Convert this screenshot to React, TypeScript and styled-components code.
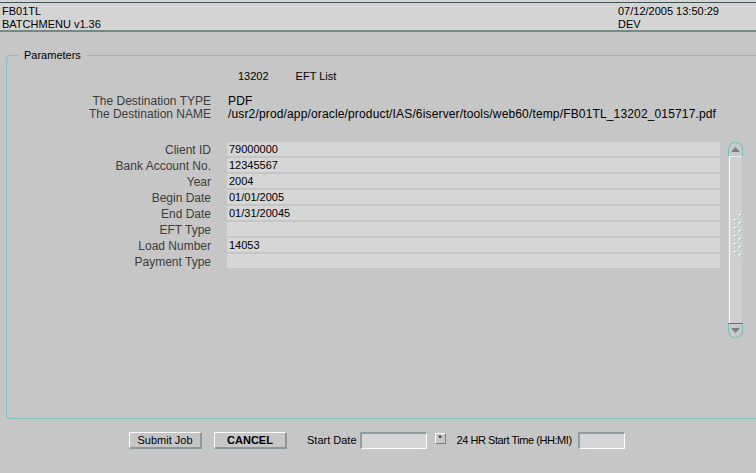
import React from "react";
import styled, { createGlobalStyle } from "styled-components";

const Global = createGlobalStyle`
  html, body { margin: 0; padding: 0; }
  body {
    background: #c6c6c6;
    font-family: "Liberation Sans", Arial, sans-serif;
    color: #000;
    width: 756px;
    height: 473px;
    overflow: hidden;
  }
`;

const Page = styled.div`
  width: 756px;
  height: 473px;
  display: flex;
  flex-direction: column;
`;

const HeaderOuter = styled.header`
  background: #d4d4d4;
  padding-top: 2px;
`;

const HeaderBar = styled.div`
  border-top: 1px solid #3b5654;
  border-bottom: 2px solid #718a86;
  padding: 2px 0 0 2px;
  box-sizing: border-box;
  height: 30px;
  display: grid;
  grid-template-columns: 616px 1fr;
  font-size: 11px;
  line-height: 13px;
`;

const HeaderCol = styled.div`
  display: flex;
  flex-direction: column;
`;

const Frame = styled.section`
  position: relative;
  margin: 23px 0 0 6px;
  height: 364px;
  box-sizing: border-box;
  border: 1px solid #7cc4c1;
  border-right: none;
  border-radius: 5px 0 0 4px;
  display: flex;
  flex-direction: column;
`;

const Legend = styled.div`
  position: absolute;
  top: -7px;
  left: 11px;
  padding: 0 6px;
  background: #c6c6c6;
  font-size: 11px;
  line-height: 13px;
`;

const TitleRow = styled.div`
  margin: 13px 0 0 231px;
  font-size: 11px;
  line-height: 14px;
  display: flex;
  gap: 27px;
`;

const InfoGrid = styled.div`
  margin-top: 12px;
  display: grid;
  grid-template-columns: 204px 1fr;
  column-gap: 17px;
  font-size: 12px;
  line-height: 13px;
`;

const InfoLabel = styled.div`
  text-align: right;
  color: #3c3c3c;
`;

const InfoValue = styled.div`
  letter-spacing: 0.15px;
  white-space: nowrap;
`;

const FieldsArea = styled.div`
  margin-top: 21px;
  display: flex;
  align-items: flex-start;
`;

const FieldsGrid = styled.div`
  display: grid;
  grid-template-columns: 204px 493px;
  grid-auto-rows: 14px;
  column-gap: 16px;
  row-gap: 2px;
`;

const FieldLabel = styled.div`
  text-align: right;
  font-size: 12px;
  line-height: 14px;
  padding-top: 1px;
  color: #3c3c3c;
  white-space: nowrap;
`;

const FieldBox = styled.div`
  background: #d6d6d6;
  font-size: 11px;
  line-height: 13px;
  padding: 1px 0 0 2px;
  box-sizing: border-box;
  height: 14px;
`;

const Scroll = styled.div`
  margin-left: 8px;
  width: 15px;
  height: 196px;
  display: flex;
  flex-direction: column;
`;

const ScrollBtn = styled.div<{ $up?: boolean }>`
  height: 15px;
  box-sizing: border-box;
  border: 1px solid #6fc0bf;
  border-radius: ${(p) => (p.$up ? "7px 7px 0 0" : "0 0 7px 7px")};
  ${(p) => (p.$up ? "border-bottom: 1px solid #e8f2f2;" : "border-top: 1px solid #5e7474;")}
  background: #c8c8c8;
  display: flex;
  align-items: center;
  justify-content: center;
`;

const Track = styled.div`
  flex: 1;
  margin: 0 1px 0 1px;
  border-left: 1px solid #ffffff;
  background: #cfcfcf;
  display: flex;
  justify-content: center;
  padding-top: 57px;
  box-sizing: border-box;
`;

const BottomRow = styled.div`
  margin-top: 13px;
  padding-left: 129px;
  display: flex;
  align-items: center;
  height: 17px;
`;

const Button = styled.button<{ $w: number; $bold?: boolean; $ml?: number }>`
  width: ${(p) => p.$w}px;
  height: 17px;
  margin: 0 0 0 ${(p) => p.$ml ?? 0}px;
  padding: 0;
  box-sizing: border-box;
  background: #c6c6c6;
  border-top: 1px solid #ffffff;
  border-left: 1px solid #ffffff;
  border-bottom: 2px solid #8a9a9a;
  border-right: 2px solid #8a9a9a;
  font-family: "Liberation Sans", Arial, sans-serif;
  font-size: 11px;
  font-weight: ${(p) => (p.$bold ? 700 : 400)};
  color: #000;
  line-height: 13px;
`;

const RowText = styled.span<{ $ml: number; $tight?: boolean }>`
  margin-left: ${(p) => p.$ml}px;
  font-size: 11px;
  line-height: 13px;
  letter-spacing: ${(p) => (p.$tight ? "-0.45px" : "0")};
  white-space: nowrap;
`;

const DateInput = styled.div<{ $w: number; $ml: number }>`
  width: ${(p) => p.$w}px;
  height: 17px;
  margin-left: ${(p) => p.$ml}px;
  box-sizing: border-box;
  background: #d6d6d6;
  border-top: 2px solid #8c9e9e;
  border-left: 2px solid #8c9e9e;
  border-bottom: 1px solid #ffffff;
  border-right: 1px solid #ffffff;
`;

const StarBtn = styled.div`
  width: 11px;
  height: 11px;
  margin: 0 0 4px 8px;
  box-sizing: border-box;
  background: #c8c8c8;
  border-top: 1px solid #ffffff;
  border-left: 1px solid #ffffff;
  border-bottom: 1px solid #6e8484;
  border-right: 1px solid #6e8484;
  font-size: 9px;
  line-height: 11px;
  text-align: center;
  display: flex;
  align-items: center;
  justify-content: center;
`;

const fields: [string, string][] = [
  ["Client ID", "79000000"],
  ["Bank Account No.", "12345567"],
  ["Year", "2004"],
  ["Begin Date", "01/01/2005"],
  ["End Date", "01/31/20045"],
  ["EFT Type", ""],
  ["Load Number", "14053"],
  ["Payment Type", ""],
];

const Grip = () => {
  const left = [5, 13, 21, 29, 37];
  const right = [0, 8, 16, 24, 32, 40];
  return (
    <svg width="11" height="44" viewBox="0 0 11 44">
      {left.map((y) => (
        <g key={"l" + y}>
          <rect x="3" y={y} width="2" height="2" fill="#ffffff" />
          <rect x="4" y={y + 1} width="1.5" height="1.5" fill="#6fbfbe" />
        </g>
      ))}
      {right.map((y) => (
        <g key={"r" + y}>
          <rect x="8" y={y} width="2" height="2" fill="#ffffff" />
          <rect x="9" y={y + 1} width="1.5" height="1.5" fill="#6fbfbe" />
        </g>
      ))}
    </svg>
  );
};

export default function App() {
  return (
    <Page>
      <Global />
      <HeaderOuter>
        <HeaderBar>
          <HeaderCol>
            <span>FB01TL</span>
            <span>BATCHMENU v1.36</span>
          </HeaderCol>
          <HeaderCol>
            <span>07/12/2005 13:50:29</span>
            <span>DEV</span>
          </HeaderCol>
        </HeaderBar>
      </HeaderOuter>

      <Frame>
        <Legend>Parameters</Legend>
        <TitleRow>
          <span>13202</span>
          <span>EFT List</span>
        </TitleRow>
        <InfoGrid>
          <InfoLabel>The Destination TYPE</InfoLabel>
          <InfoValue>PDF</InfoValue>
          <InfoLabel>The Destination NAME</InfoLabel>
          <InfoValue>/usr2/prod/app/oracle/product/IAS/6iserver/tools/web60/temp/FB01TL_13202_015717.pdf</InfoValue>
        </InfoGrid>
        <FieldsArea>
          <FieldsGrid>
            {fields.map(([label, value]) => (
              <React.Fragment key={label}>
                <FieldLabel>{label}</FieldLabel>
                <FieldBox>{value}</FieldBox>
              </React.Fragment>
            ))}
          </FieldsGrid>
          <Scroll>
            <ScrollBtn $up>
              <svg width="9" height="5" viewBox="0 0 9 5">
                <path d="M4.5 0 L9 5 L0 5 Z" fill="#6f8585" />
              </svg>
            </ScrollBtn>
            <Track>
              <Grip />
            </Track>
            <ScrollBtn>
              <svg width="9" height="5" viewBox="0 0 9 5">
                <path d="M0 0 L9 0 L4.5 5 Z" fill="#6f8585" />
              </svg>
            </ScrollBtn>
          </Scroll>
        </FieldsArea>
      </Frame>

      <BottomRow>
        <Button $w={73}>Submit Job</Button>
        <Button $w={73} $ml={12} $bold>
          CANCEL
        </Button>
        <RowText $ml={20}>Start Date</RowText>
        <DateInput $w={67} $ml={3} />
        <StarBtn>*</StarBtn>
        <RowText $ml={11} $tight>
          24 HR Start Time (HH:MI)
        </RowText>
        <DateInput $w={47} $ml={6} />
      </BottomRow>
    </Page>
  );
}
